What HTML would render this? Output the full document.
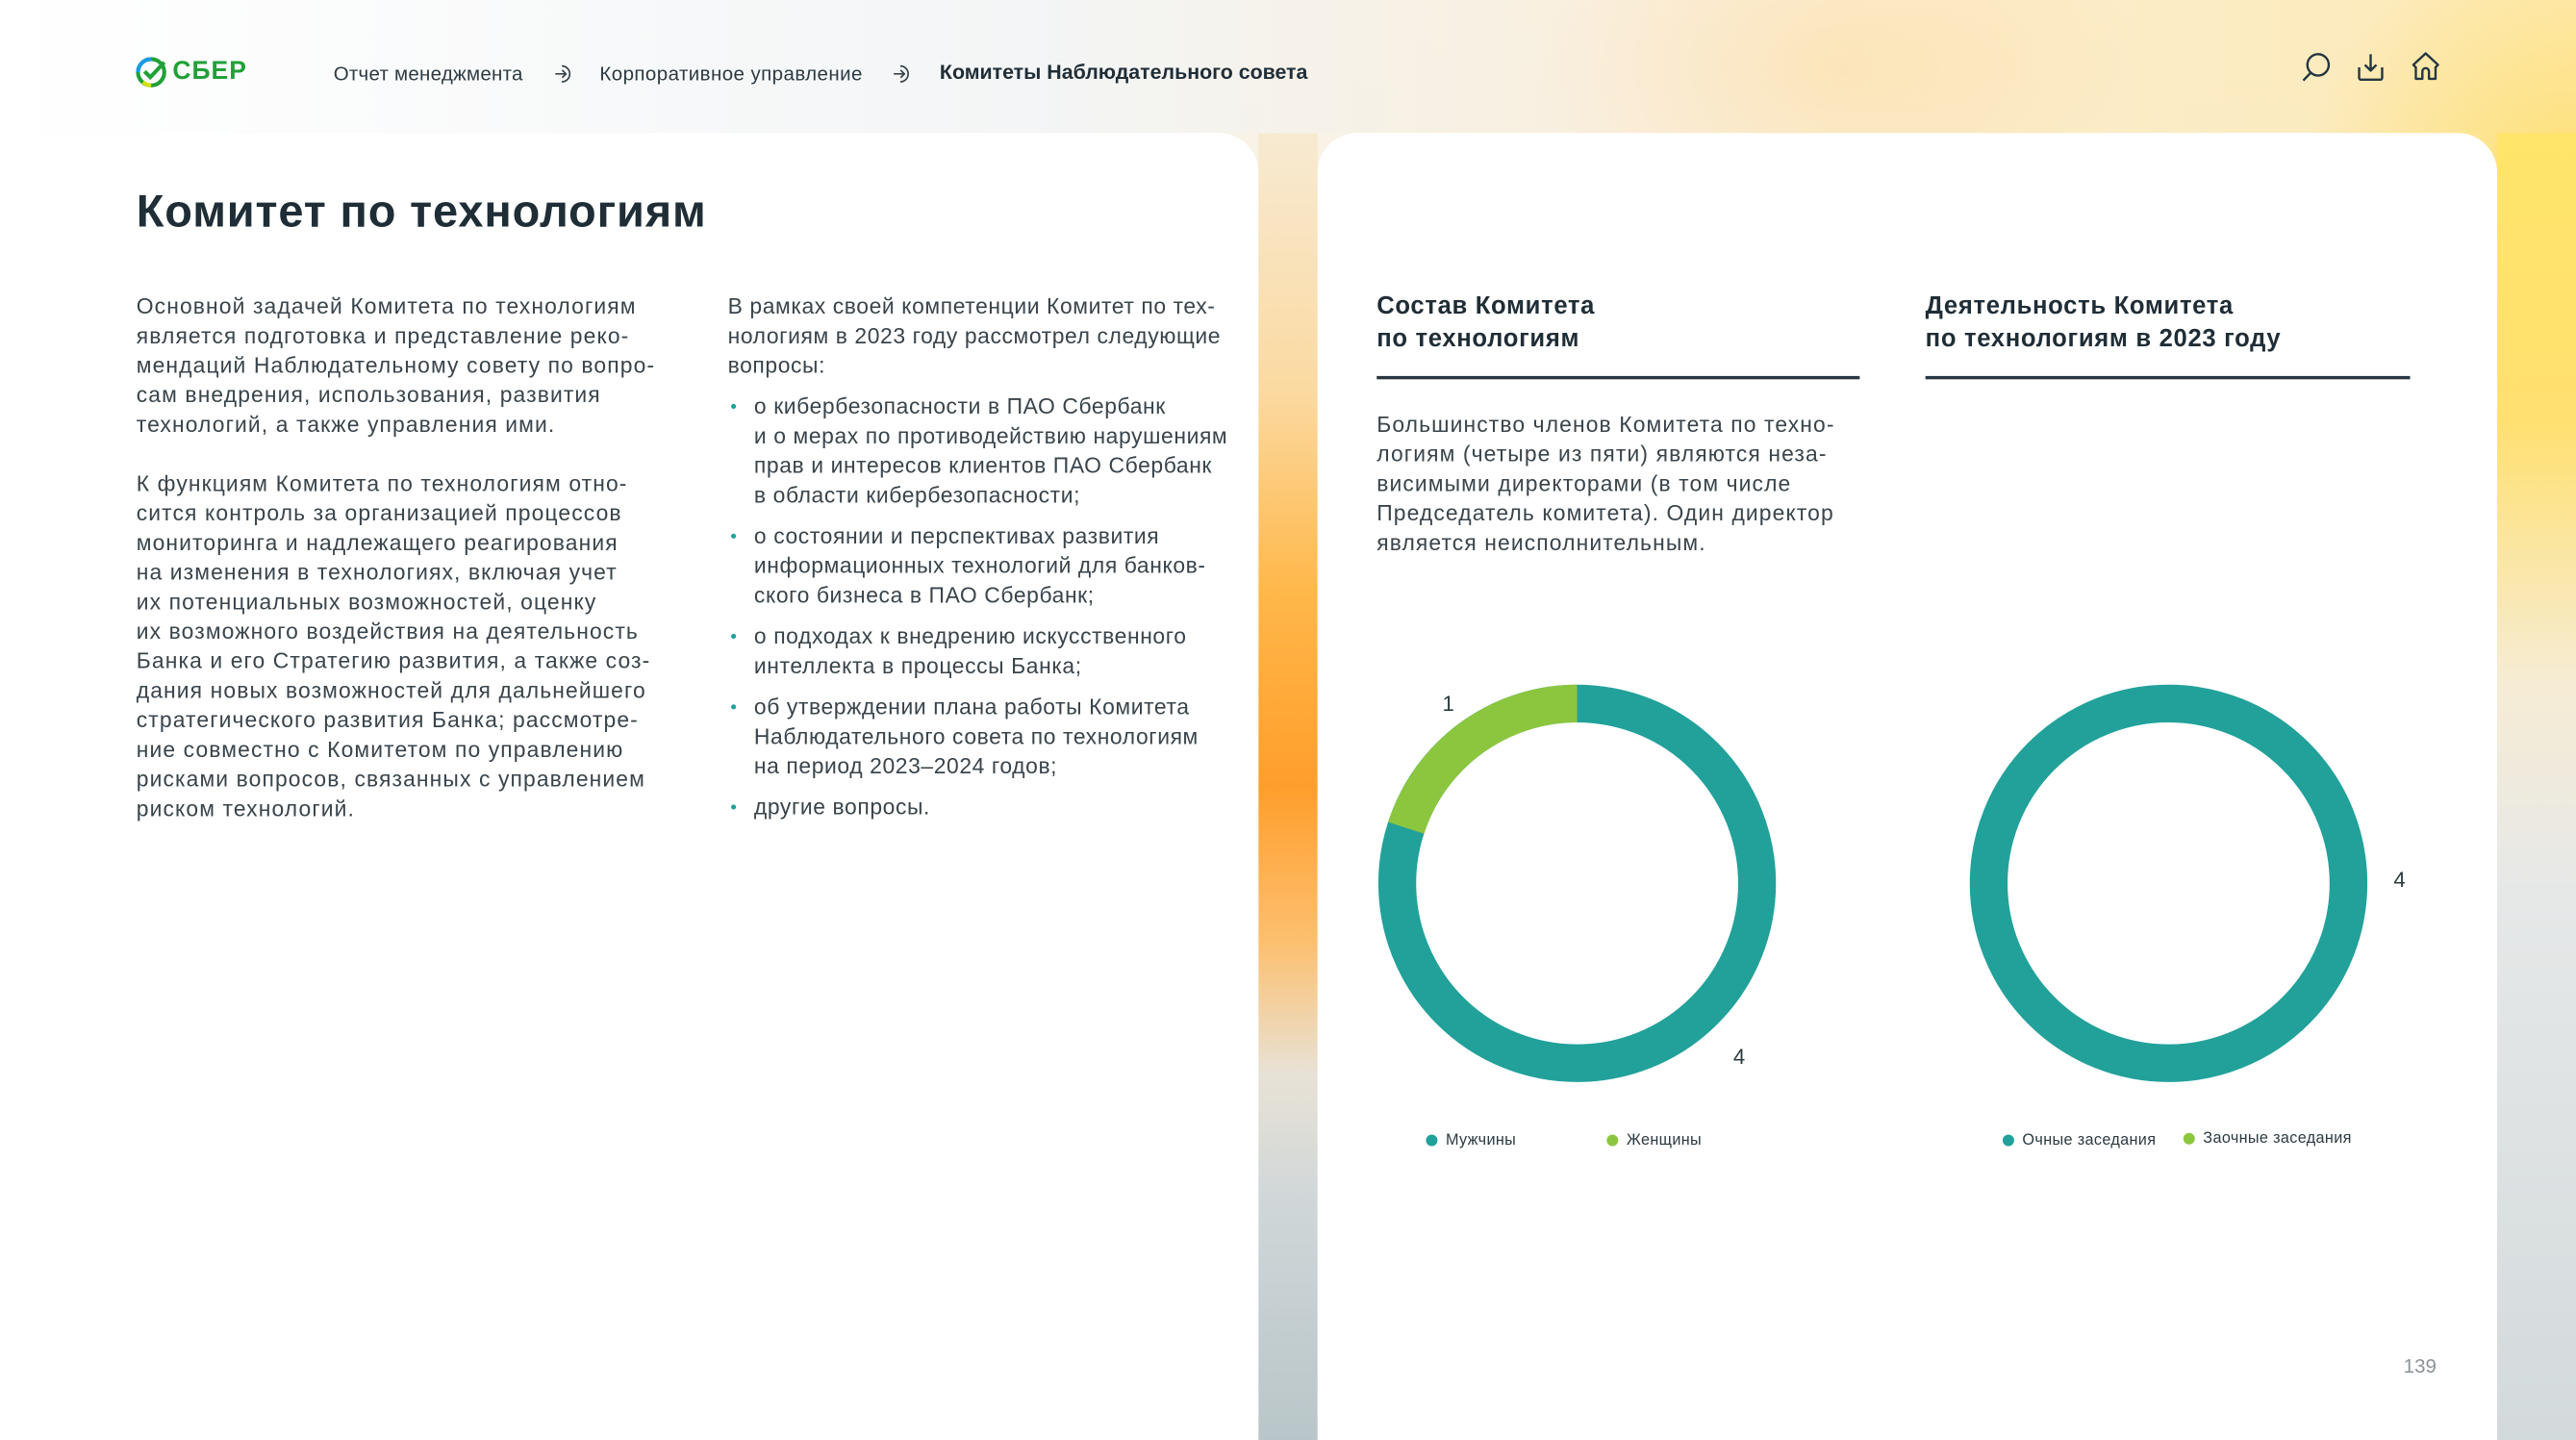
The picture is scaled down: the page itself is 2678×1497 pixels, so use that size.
<!DOCTYPE html>
<html><head><meta charset="utf-8">
<style>
html,body{margin:0;padding:0;width:2678px;height:1497px;overflow:hidden;background:#f3f4f4;}
#w{position:absolute;left:0;top:0;width:1568px;height:877px;transform:scale(1.70791,1.70696);transform-origin:0 0;font-family:"Liberation Sans","Noto Sans CJK SC",sans-serif;color:#2d3a42;}
.bg{position:absolute;inset:0;background:
radial-gradient(ellipse 260px 160px at 1120px 40px,rgba(255,205,120,.55),rgba(255,220,150,0) 70%),
radial-gradient(ellipse 220px 260px at 1560px 150px,rgba(255,215,60,.9),rgba(255,230,120,0) 75%),
linear-gradient(180deg,#fbf3e6 0%,#f1eee8 45%,#dfe2e4 100%);}
.card{position:absolute;background:#fff;}
.t{position:absolute;white-space:nowrap;}
.p{position:absolute;font-size:13.4px;line-height:18px;color:#3a444b;white-space:nowrap;letter-spacing:.65px;}
.bul{position:relative;padding-left:16px;}
.bul:before{content:"";position:absolute;left:2px;top:7px;width:3px;height:3px;border-radius:50%;background:#21a19a;}
.h{position:absolute;font-size:15px;font-weight:bold;line-height:20px;color:#1f2d36;letter-spacing:.4px;}
.ln{position:absolute;height:1.5px;background:#2a3740;}
.lg{position:absolute;font-size:9.5px;color:#2d3a42;white-space:nowrap;}
.dot{display:inline-block;width:7px;height:7px;border-radius:50%;margin-right:5px;vertical-align:-1px;}
</style></head><body><div id="w">
<div class="bg"></div>
<div style="position:absolute;left:766px;top:81px;width:36px;height:796px;background:linear-gradient(180deg,#f7ead2 0%,#fbd9a0 20%,#ffb84a 35%,#ff9e2c 50%,#fcc070 62%,#e8e2d6 72%,#cfd6d8 82%,#b9c6c9 100%);"></div>
<div style="position:absolute;left:1520px;top:81px;width:48px;height:796px;background:linear-gradient(180deg,#ffe56a 0%,#ffe070 22%,#f6ecd4 42%,#e6e8e8 58%,#d3dadc 100%);"></div>
<div style="position:absolute;left:0;top:0;width:1568px;height:81px;background:linear-gradient(90deg,#fff 0%,#f3f5f6 40%,rgba(250,235,210,.6) 65%,rgba(255,225,130,.5) 100%);"></div>
<div class="card" style="left:0;top:81px;width:766px;height:796px;border-top-right-radius:24px;"></div>
<div class="card" style="left:802px;top:81px;width:718px;height:796px;border-radius:24px 24px 0 0;"></div>

<svg style="position:absolute;left:82px;top:34px" width="20" height="20" viewBox="0 0 20 20"><circle cx="10" cy="10" r="8" fill="none" stroke="#21a038" stroke-width="2.4"/><path d="M2 10a8 8 0 0 1 8-8" fill="none" stroke="#1a9be8" stroke-width="2.4"/><path d="M5 16a8 8 0 0 0 5 2" fill="none" stroke="#d6e000" stroke-width="2.4"/><path d="M6 9.5l3.5 3.5L18 4" fill="none" stroke="#21a038" stroke-width="2.4"/></svg>
<div class="t" style="left:105px;top:35px;font-size:15.5px;font-weight:bold;color:#21a038;letter-spacing:.6px">СБЕР</div>
<div class="t" style="left:203px;top:38px;font-size:12px;color:#2d3a42;letter-spacing:.15px">Отчет менеджмента</div>
<svg style="position:absolute;left:337px;top:39px" width="12" height="12" viewBox="0 0 12 12" fill="none" stroke="#3a444b" stroke-width="1"><path d="M5 1.2a4.8 4.8 0 1 1 0 9.6"/><path d="M1 6h6.5M5.2 3.7L7.5 6 5.2 8.3"/></svg>
<div class="t" style="left:365px;top:38px;font-size:12px;color:#2d3a42;letter-spacing:.25px">Корпоративное управление</div>
<svg style="position:absolute;left:543px;top:39px" width="12" height="12" viewBox="0 0 12 12" fill="none" stroke="#3a444b" stroke-width="1"><path d="M5 1.2a4.8 4.8 0 1 1 0 9.6"/><path d="M1 6h6.5M5.2 3.7L7.5 6 5.2 8.3"/></svg>
<div class="t" style="left:572px;top:37px;font-size:12.5px;font-weight:bold;color:#1f2d36">Комитеты Наблюдательного совета</div>

<svg style="position:absolute;left:1400px;top:32px" width="20" height="18" viewBox="0 0 20 18" fill="none" stroke="#243640" stroke-width="1.4"><circle cx="11" cy="7.5" r="6.5"/><path d="M6.5 12.3L2 17"/></svg>
<svg style="position:absolute;left:1434px;top:32px" width="18" height="18" viewBox="0 0 18 18" fill="none" stroke="#243640" stroke-width="1.4" stroke-linejoin="round"><path d="M9 1v10M5.5 7.5L9 11l3.5-3.5"/><path d="M2 9v6.5a1 1 0 0 0 1 1h12a1 1 0 0 0 1-1V9"/></svg>
<svg style="position:absolute;left:1467px;top:31px" width="19" height="19" viewBox="0 0 19 19" fill="none" stroke="#243640" stroke-width="1.4" stroke-linejoin="round"><path d="M2 8.5L9.5 1.5 17 8.5 15.5 10V17H11.5V12.5a2 2 0 0 0-4 0V17H3.5V10z"/></svg>

<div class="t" style="left:83px;top:113px;font-size:27.5px;font-weight:bold;color:#1f2d36;letter-spacing:.5px">Комитет по технологиям</div>

<div class="p" style="left:83px;top:178px">Основной задачей Комитета по технологиям<br>является подготовка и представление реко-<br>мендаций Наблюдательному совету по вопро-<br>сам внедрения, использования, развития<br>технологий, а также управления ими.<br><br>К функциям Комитета по технологиям отно-<br>сится контроль за организацией процессов<br>мониторинга и надлежащего реагирования<br>на изменения в технологиях, включая учет<br>их потенциальных возможностей, оценку<br>их возможного воздействия на деятельность<br>Банка и его Стратегию развития, а также соз-<br>дания новых возможностей для дальнейшего<br>стратегического развития Банка; рассмотре-<br>ние совместно с Комитетом по управлению<br>рисками вопросов, связанных с управлением<br>риском технологий.</div>

<div class="p" style="left:443px;top:178px;letter-spacing:.35px">В рамках своей компетенции Комитет по тех-<br>нологиям в 2023 году рассмотрел следующие<br>вопросы:
<div class="bul" style="margin-top:7px">о кибербезопасности в ПАО Сбербанк<br>и о мерах по противодействию нарушениям<br>прав и интересов клиентов ПАО Сбербанк<br>в области кибербезопасности;</div>
<div class="bul" style="margin-top:7px">о состоянии и перспективах развития<br>информационных технологий для банков-<br>ского бизнеса в ПАО Сбербанк;</div>
<div class="bul" style="margin-top:7px">о подходах к внедрению искусственного<br>интеллекта в процессы Банка;</div>
<div class="bul" style="margin-top:7px">об утверждении плана работы Комитета<br>Наблюдательного совета по технологиям<br>на период 2023–2024 годов;</div>
<div class="bul" style="margin-top:7px">другие вопросы.</div></div>

<div class="h" style="left:838px;top:177px">Состав Комитета<br>по технологиям</div>
<div class="h" style="left:1172px;top:177px">Деятельность Комитета<br>по технологиям в 2023 году</div>
<div class="ln" style="left:838px;top:229px;width:294px"></div>
<div class="ln" style="left:1172px;top:229px;width:295px"></div>
<div class="p" style="left:838px;top:250px">Большинство членов Комитета по техно-<br>логиям (четыре из пяти) являются неза-<br>висимыми директорами (в том числе<br>Председатель комитета). Один директор<br>является неисполнительным.</div>

<svg style="position:absolute;left:0;top:0" width="1568" height="877">
<circle cx="960" cy="538" r="109.5" fill="none" stroke="#21a19a" stroke-width="23"/>
<path d="M960 428.5A109.5 109.5 0 0 0 855.9 504.2" fill="none" stroke="#8cc63f" stroke-width="23"/>
<circle cx="1320" cy="538" r="109.5" fill="none" stroke="#21a19a" stroke-width="23"/>
</svg>
<div class="t" style="left:878px;top:421px;font-size:13px">1</div>
<div class="t" style="left:1055px;top:636px;font-size:13px">4</div>
<div class="t" style="left:1457px;top:528px;font-size:13px">4</div>

<div class="lg" style="left:868px;top:689px;letter-spacing:.2px"><span class="dot" style="background:#21a19a"></span>Мужчины</div>
<div class="lg" style="left:978px;top:689px;letter-spacing:.2px"><span class="dot" style="background:#8cc63f"></span>Женщины</div>
<div class="lg" style="left:1219px;top:689px;letter-spacing:.2px"><span class="dot" style="background:#21a19a"></span>Очные заседания</div>
<div class="lg" style="left:1329px;top:688px;letter-spacing:.2px"><span class="dot" style="background:#8cc63f"></span>Заочные заседания</div>

<div class="t" style="left:1463px;top:825px;font-size:12px;color:#8a9398">139</div>
</div></body></html>
